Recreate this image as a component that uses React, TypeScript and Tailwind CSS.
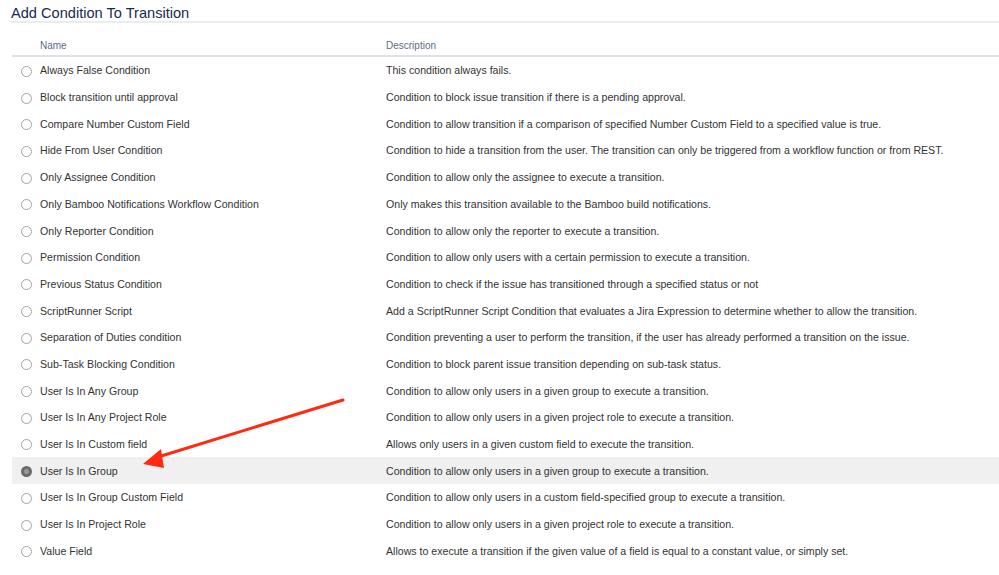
const rows: [string, string][] = [
  ["Always False Condition", "This condition always fails."],
  ["Block transition until approval", "Condition to block issue transition if there is a pending approval."],
  ["Compare Number Custom Field", "Condition to allow transition if a comparison of specified Number Custom Field to a specified value is true."],
  ["Hide From User Condition", "Condition to hide a transition from the user. The transition can only be triggered from a workflow function or from REST."],
  ["Only Assignee Condition", "Condition to allow only the assignee to execute a transition."],
  ["Only Bamboo Notifications Workflow Condition", "Only makes this transition available to the Bamboo build notifications."],
  ["Only Reporter Condition", "Condition to allow only the reporter to execute a transition."],
  ["Permission Condition", "Condition to allow only users with a certain permission to execute a transition."],
  ["Previous Status Condition", "Condition to check if the issue has transitioned through a specified status or not"],
  ["ScriptRunner Script", "Add a ScriptRunner Script Condition that evaluates a Jira Expression to determine whether to allow the transition."],
  ["Separation of Duties condition", "Condition preventing a user to perform the transition, if the user has already performed a transition on the issue."],
  ["Sub-Task Blocking Condition", "Condition to block parent issue transition depending on sub-task status."],
  ["User Is In Any Group", "Condition to allow only users in a given group to execute a transition."],
  ["User Is In Any Project Role", "Condition to allow only users in a given project role to execute a transition."],
  ["User Is In Custom field", "Allows only users in a given custom field to execute the transition."],
  ["User Is In Group", "Condition to allow only users in a given group to execute a transition."],
  ["User Is In Group Custom Field", "Condition to allow only users in a custom field-specified group to execute a transition."],
  ["User Is In Project Role", "Condition to allow only users in a given project role to execute a transition."],
  ["Value Field", "Allows to execute a transition if the given value of a field is equal to a constant value, or simply set."],
];

function Radio({ checked }: { checked: boolean }) {
  return (
    <span
      className={
        checked
          ? "block h-[11px] w-[11px] rounded-full border-[3px] border-[#6b6b6b] bg-[#9a9a9a]"
          : "block h-[11px] w-[11px] rounded-full border border-[#a3a3a3] bg-white"
      }
    />
  );
}

export default function App() {
  return (
    <div className="relative h-[575px] w-[999px] overflow-hidden bg-white font-['Liberation_Sans',Arial,sans-serif] text-[#333]">
      <div className="pl-[11px]">
        <h1 className="h-[21px] text-[14.6px] leading-[26px] text-[#172b4d]">Add Condition To Transition</h1>
        <div className="h-[2px] bg-[#ebecf0]" />
      </div>

      <div className="pl-[12px] pt-[12px]">
        <div className="flex h-[22px] items-center border-b-2 border-[#dfe1e6] text-[10px] text-[#5e6c84]">
          <div className="w-[374px] pl-[28px]">Name</div>
          <div>Description</div>
        </div>
        {rows.map(([name, desc], i) => {
          const sel = name === "User Is In Group";
          return (
            <div
              key={name + i}
              className={`flex h-[26.7px] items-center pt-[2px] text-[10.6px] ${sel ? "bg-[#f0f0f0]" : ""}`}
            >
              <div className="flex w-[28px] justify-center pl-[1px]">
                <Radio checked={sel} />
              </div>
              <div className="w-[346px] whitespace-nowrap">{name}</div>
              <div className="whitespace-nowrap">{desc}</div>
            </div>
          );
        })}
      </div>

      <svg className="absolute left-0 top-0" width="999" height="575" viewBox="0 0 999 575">
        <line x1="343" y1="400" x2="158" y2="457" stroke="#ff2a12" strokeWidth="3" strokeLinecap="round" />
        <polygon points="143,464 161,449 164,468" fill="#ff2a12" />
      </svg>
    </div>
  );
}
